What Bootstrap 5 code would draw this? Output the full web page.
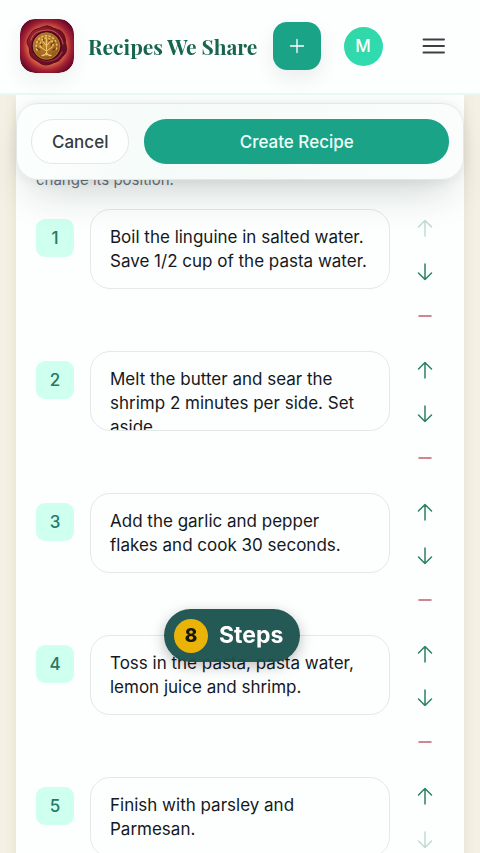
<!DOCTYPE html>
<html lang="en">
<head>
<meta charset="utf-8">
<meta name="viewport" content="width=device-width, initial-scale=1">
<title>Recipes We Share</title>
<link href="https://cdn.jsdelivr.net/npm/bootstrap@5.3.0/dist/css/bootstrap.min.css" rel="stylesheet">
<style>
  .scroller, textarea { scrollbar-width: none; }
  .scroller::-webkit-scrollbar, textarea::-webkit-scrollbar { display: none; }
  body { font-family: Inter, "Liberation Sans", sans-serif; font-size: 17px; line-height: 24px; background: #f4f0e3; color: #16181d; }
  svg { display: block; fill: none; stroke: currentColor; stroke-linecap: round; stroke-linejoin: round; }

  .site-header { min-height: 95px; padding: 0 22px 1px 20px; background: #fdfffe; border-bottom: 2px solid #e8f8f3; z-index: 30; }
  .brand { gap: 14px; color: #17654f; font: 700 21px/32px "Playfair Display", "Liberation Serif", serif; white-space: nowrap; }
  .brand:hover { color: #17654f; }
  .brand-seal { width: 54px; height: 54px; border-radius: 15px; box-shadow: 0 8px 20px rgba(20, 60, 50, .07); }
  .head-btn { width: 48px; height: 48px; border: 0; padding: 0; background: none; color: #3c4043; }
  .head-add { background: #1aa387; color: #fff; border-radius: 14px; box-shadow: 0 8px 20px rgba(20, 60, 50, .09); margin-right: 18px; }
  .head-user { margin-right: 23px; }
  .avatar { width: 39px; height: 39px; background: linear-gradient(135deg, #33d6a4, #2fdcb4); color: #fff; font-weight: 500; }

  .scroller { min-height: 0; }
  .sheet { margin: 0 16px; padding: 8px 0 40px; background: #fcfffe; box-shadow: 0 0 12px rgba(115, 105, 60, .1); }
  .actions { top: 8px; gap: 15px; padding: 15px 14px; border: 1px solid #e0e9e7; border-radius: 22px; background: linear-gradient(100deg, #fbfffe, #f5fbf8 35%, #fafdfc); box-shadow: 0 24px 40px -14px rgba(20, 35, 30, .2), 0 0 16px -2px rgba(20, 70, 55, .12); z-index: 20; }
  .actions .btn { height: 45px; border-radius: 22px; font-size: 17px; line-height: 24px; font-weight: 500; }
  .btn-cancel { padding: 0 20px; color: #363a41; background: #fdffff; border: 1px solid #e3e9e9; }
  .btn-create { color: #effffa; background: #1aa387; border: 0; }

  .steps { padding: 0 20px; }
  .hint { margin: -12px 0 17px; color: #6b7280; font-size: 15px; line-height: 24px; }
  .step-list { gap: 16px; }
  .step { gap: 16px; }
  .step-no { width: 38px; height: 38px; margin-top: 10px; border-radius: 9px; background: #ceffef; color: #267962; font-weight: 500; }
  .step-text { min-width: 0; height: 80px; padding: 15px 19px; border: 1px solid #e3e8e9; border-radius: 20px; background: transparent; color: #16181d; font-size: 17px; line-height: 24px; resize: none; overflow: auto; }
  .step-tools { gap: 6px; }
  .tool { width: 38px; height: 38px; padding: 0; border: 0; background: none; color: #2b8065; }
  .tool:disabled { opacity: .28; }
  .tool-remove { color: #c35d66; }

  .count-pill { left: 164px; bottom: 191px; gap: 11px; padding: 9px 17px 9px 10px; border-radius: 27px; background: rgba(27, 82, 78, .96); color: #fff; font-size: 23px; line-height: 35px; font-weight: 700; box-shadow: 0 4px 14px rgba(0, 0, 0, .26); z-index: 10; }
  .count-no { width: 34px; height: 34px; background: #eab308; color: #171712; font-size: 19px; font-weight: 800; }
</style>
<script src="https://cdn.jsdelivr.net/npm/bootstrap@5.3.0/dist/js/bootstrap.bundle.min.js" defer></script>
</head>
<body class="vh-100 d-flex flex-column">
<svg class="d-none" aria-hidden="true">
  <symbol id="i-up" viewBox="0 0 18 18"><path d="M9 17V1.500M2.500 8 9 1.500 15.500 8" stroke-width="1.500"/></symbol>
  <symbol id="i-down" viewBox="0 0 18 18"><path d="M9 1v15.500M2.500 10 9 16.500 15.500 10" stroke-width="1.500"/></symbol>
  <symbol id="i-minus" viewBox="0 0 18 18"><path d="M3 9h12" stroke-width="1.500"/></symbol>
</svg>

<header class="site-header d-flex align-items-center justify-content-between">
  <a class="brand d-flex align-items-center text-decoration-none" href="#">
    <svg class="brand-seal" viewBox="0 0 54 54" stroke="none" aria-hidden="true">
      <defs>
        <radialGradient id="bg" cx=".5" cy=".5" r=".68"><stop offset=".5" stop-color="#dd6a42"/><stop offset=".66" stop-color="#a52335"/><stop offset=".82" stop-color="#6d0a28"/><stop offset="1" stop-color="#3a0418"/></radialGradient>
        <linearGradient id="wax" x1="0" y1="0" x2="1" y2="1"><stop offset="0" stop-color="#ab3038"/><stop offset=".35" stop-color="#7a1227"/><stop offset="1" stop-color="#5a0b20"/></linearGradient>
        <radialGradient id="coin" cx=".4" cy=".35" r=".7"><stop offset="0" stop-color="#c98f3a"/><stop offset="1" stop-color="#8f5419"/></radialGradient>
      </defs>
      <rect width="54" height="54" rx="15" fill="url(#bg)" stroke="none"/>
      <path d="M27 7c4 0 5 2 9 3s6 2 8 6 1 6 2 10 1 7-2 10-4 6-8 7-6 3-10 3-6-2-9-4-6-3-7-7 0-6-2-9 0-7 2-10 3-5 7-6 6-3 10-3z" fill="url(#wax)" stroke="#5d0c20" stroke-width="1"/>
      <path d="M11 21c2-7 6-8 10-9s9-2 14 1 7 7 8 12" stroke="#cf5e5a" stroke-width="1"/>
      <path d="M42 33c-3 6-8 9-14 9s-10-2-14-7" stroke="#a5323f" stroke-width="1.500"/>
      <circle cx="26.500" cy="27" r="15" fill="#48091a" stroke="none"/>
      <circle cx="26.500" cy="27" r="13.300" fill="url(#coin)" stroke="#b87a2b" stroke-width="1"/>
      <g stroke="#623307" stroke-width="1.200"><path d="M20 31l-3-2M33 31l3-2M22 26l-3-3M31 26l3-3M24 22l-1-3M29 22l1-3"/></g>
      <g stroke="#edbd5e" stroke-width="1.600" stroke-dasharray="1 2.800"><path d="M17 31a10.300 10.300 0 1 1 19 0"/><path d="M20.500 28a6.500 6.500 0 1 1 12 0"/></g>
      <g stroke="#efc46b" stroke-width="1"><path d="M26.500 36V20M26.500 32l-6-4M26.500 32l6-4M26.500 27l-4-5M26.500 27l4-5"/><path d="M22 36.500c3 0 4-1 4.500-3 .5 2 2 3 4.500 3" stroke-width="1.300"/></g>
    </svg>
    <span>Recipes We Share</span>
  </a>
  <div class="d-flex align-items-center">
    <button class="head-btn head-add d-flex align-items-center justify-content-center" type="button" aria-label="Add recipe">
      <svg width="16" height="16" viewBox="0 0 16 16"><path d="M8 1.500v13M1.500 8h13" stroke-width="1.300"/></svg>
    </button>
    <button class="head-btn head-user d-flex align-items-center justify-content-center" type="button">
      <span class="avatar rounded-circle d-flex align-items-center justify-content-center">M</span>
    </button>
    <button class="head-btn d-flex align-items-center justify-content-center" type="button" aria-label="Menu">
      <svg width="24" height="18" viewBox="0 0 24 18"><path d="M1.500 2.500h20.500M1.500 9h20.500M1.500 15.500h20.500" stroke-width="1.900"/></svg>
    </button>
  </div>
</header>

<div class="scroller flex-grow-1 overflow-auto">
<main class="sheet">
  <div class="actions position-sticky d-flex">
    <button class="btn btn-cancel" type="button">Cancel</button>
    <button class="btn btn-create flex-grow-1" type="submit">Create Recipe</button>
  </div>
  <section class="steps">
    <p class="hint">change its position.</p>
    <ol class="step-list list-unstyled d-flex flex-column mb-0">
      <li class="step d-flex align-items-start">
        <label class="step-no d-flex align-items-center justify-content-center" for="step1">1</label>
        <textarea class="step-text flex-fill" id="step1">Boil the linguine in salted water. Save 1/2 cup of the pasta water.</textarea>
        <div class="step-tools d-flex flex-column">
          <button class="tool d-flex align-items-center justify-content-center" type="button" aria-label="Move up" disabled><svg width="18" height="18"><use href="#i-up"/></svg></button>
          <button class="tool d-flex align-items-center justify-content-center" type="button" aria-label="Move down"><svg width="18" height="18"><use href="#i-down"/></svg></button>
          <button class="tool tool-remove d-flex align-items-center justify-content-center" type="button" aria-label="Remove"><svg width="18" height="18"><use href="#i-minus"/></svg></button>
        </div>
      </li>
      <li class="step d-flex align-items-start">
        <label class="step-no d-flex align-items-center justify-content-center" for="step2">2</label>
        <textarea class="step-text flex-fill" id="step2">Melt the butter and sear the shrimp 2 minutes per side. Set aside.</textarea>
        <div class="step-tools d-flex flex-column">
          <button class="tool d-flex align-items-center justify-content-center" type="button" aria-label="Move up"><svg width="18" height="18"><use href="#i-up"/></svg></button>
          <button class="tool d-flex align-items-center justify-content-center" type="button" aria-label="Move down"><svg width="18" height="18"><use href="#i-down"/></svg></button>
          <button class="tool tool-remove d-flex align-items-center justify-content-center" type="button" aria-label="Remove"><svg width="18" height="18"><use href="#i-minus"/></svg></button>
        </div>
      </li>
      <li class="step d-flex align-items-start">
        <label class="step-no d-flex align-items-center justify-content-center" for="step3">3</label>
        <textarea class="step-text flex-fill" id="step3">Add the garlic and pepper flakes and cook 30 seconds.</textarea>
        <div class="step-tools d-flex flex-column">
          <button class="tool d-flex align-items-center justify-content-center" type="button" aria-label="Move up"><svg width="18" height="18"><use href="#i-up"/></svg></button>
          <button class="tool d-flex align-items-center justify-content-center" type="button" aria-label="Move down"><svg width="18" height="18"><use href="#i-down"/></svg></button>
          <button class="tool tool-remove d-flex align-items-center justify-content-center" type="button" aria-label="Remove"><svg width="18" height="18"><use href="#i-minus"/></svg></button>
        </div>
      </li>
      <li class="step d-flex align-items-start">
        <label class="step-no d-flex align-items-center justify-content-center" for="step4">4</label>
        <textarea class="step-text flex-fill" id="step4">Toss in the pasta, pasta water, lemon juice and shrimp.</textarea>
        <div class="step-tools d-flex flex-column">
          <button class="tool d-flex align-items-center justify-content-center" type="button" aria-label="Move up"><svg width="18" height="18"><use href="#i-up"/></svg></button>
          <button class="tool d-flex align-items-center justify-content-center" type="button" aria-label="Move down"><svg width="18" height="18"><use href="#i-down"/></svg></button>
          <button class="tool tool-remove d-flex align-items-center justify-content-center" type="button" aria-label="Remove"><svg width="18" height="18"><use href="#i-minus"/></svg></button>
        </div>
      </li>
      <li class="step d-flex align-items-start">
        <label class="step-no d-flex align-items-center justify-content-center" for="step5">5</label>
        <textarea class="step-text flex-fill" id="step5">Finish with parsley and Parmesan.</textarea>
        <div class="step-tools d-flex flex-column">
          <button class="tool d-flex align-items-center justify-content-center" type="button" aria-label="Move up"><svg width="18" height="18"><use href="#i-up"/></svg></button>
          <button class="tool d-flex align-items-center justify-content-center" type="button" aria-label="Move down" disabled><svg width="18" height="18"><use href="#i-down"/></svg></button>
          <button class="tool tool-remove d-flex align-items-center justify-content-center" type="button" aria-label="Remove"><svg width="18" height="18"><use href="#i-minus"/></svg></button>
        </div>
      </li>
    </ol>
  </section>
</main>
</div>

<div class="count-pill position-fixed d-flex align-items-center">
  <span class="count-no rounded-circle d-flex align-items-center justify-content-center">8</span>
  <span>Steps</span>
</div>
</body>
</html>
